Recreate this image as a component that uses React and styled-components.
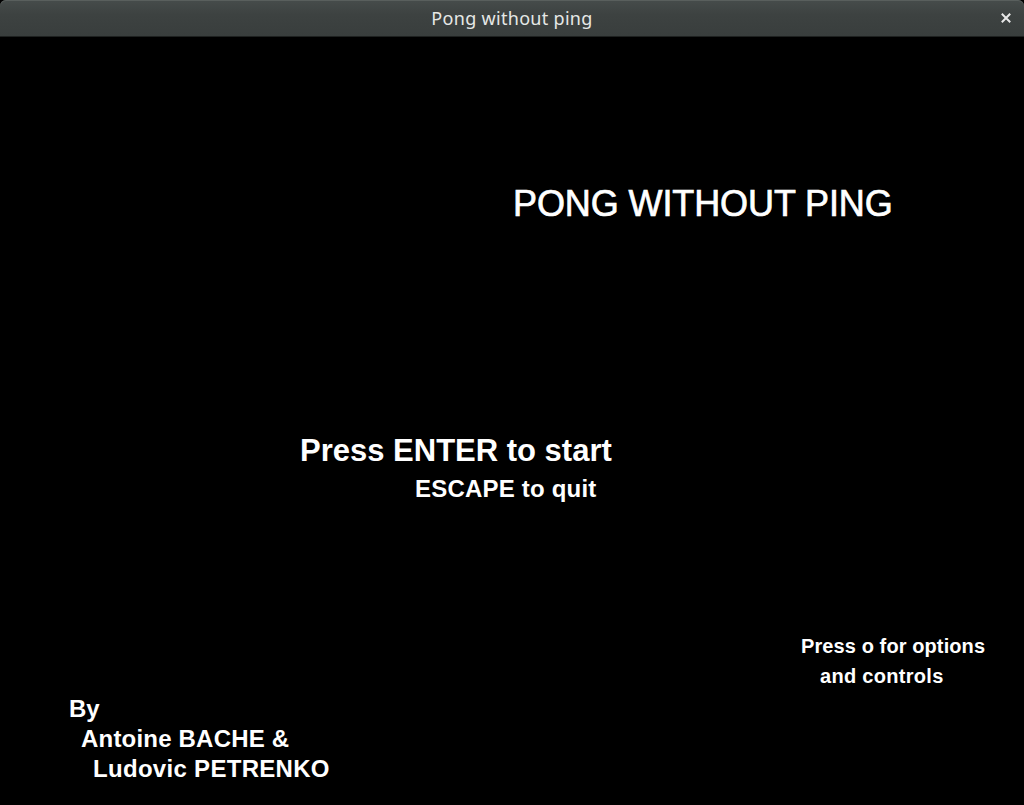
import React from 'react';
import styled, { createGlobalStyle } from 'styled-components';

const GlobalStyle = createGlobalStyle`
	html, body {
		margin: 0;
		padding: 0;
		background: #000;
	}
	#root {
		width: 1024px;
		height: 805px;
	}
`;

const App = () => {
	return (
		<>
			<GlobalStyle />
			<Window>
				<TitleBar>
					<WindowTitle>Pong without ping</WindowTitle>
					<CloseButton>
						<svg width="10" height="10" viewBox="0 0 10 10">
							<path d="M1.5 1.5 L8.5 8.5 M8.5 1.5 L1.5 8.5" stroke="#e8e8e8" strokeWidth="2" strokeLinecap="square" />
						</svg>
					</CloseButton>
				</TitleBar>
				<Screen>
					<GameTitle>PONG WITHOUT PING</GameTitle>
					<Prompt>
						<Line size={31} indent={300}>Press ENTER to start</Line>
						<Line size={24} indent={415} gap={11} spacing={0.2}>ESCAPE to quit</Line>
					</Prompt>
					<Options>
						<Line size={20} indent={801} spacing={0.1}>Press o for options</Line>
						<Line size={20} indent={820} gap={10} spacing={0.3}>and controls</Line>
					</Options>
					<Credits>
						<Line size={24} indent={69}>By</Line>
						<Line size={24} indent={81} gap={6} spacing={0.2}>Antoine BACHE &amp;</Line>
						<Line size={24} indent={93} gap={6} spacing={0.3}>Ludovic PETRENKO</Line>
					</Credits>
				</Screen>
			</Window>
		</>
	);
};

const Window = styled.div`
	display: flex;
	flex-direction: column;
	width: 1024px;
	height: 805px;
	background: #000;
	overflow: hidden;
`;

const TitleBar = styled.div`
	position: relative;
	display: flex;
	align-items: center;
	justify-content: center;
	height: 36px;
	flex-shrink: 0;
	background: linear-gradient(#464c4b, #3d4241 40%, #393e3d);
	border-radius: 6px 6px 0 0;
	border-bottom: 1px solid #1e2120;
	box-shadow: inset 0 1px 0 #595f5d;
`;

const WindowTitle = styled.span`
	font-family: "Noto Sans", "DejaVu Sans", sans-serif;
	font-size: 18px;
	letter-spacing: 0.3px;
	color: #e6e8e6;
	margin-top: -1px;
`;

const CloseButton = styled.div`
	position: absolute;
	right: 13px;
	top: 13px;
	width: 10px;
	height: 10px;
	display: flex;
`;

const Screen = styled.div`
	display: flex;
	flex-direction: column;
	flex: 1;
	font-family: "Liberation Sans", Arial, sans-serif;
	color: #fff;
`;

const GameTitle = styled.div`
	margin-top: 149px;
	padding-left: 513px;
	font-size: 36px;
	line-height: 36px;
	letter-spacing: -0.1px;
	-webkit-text-stroke: 0.7px #fff;
	white-space: nowrap;
`;

const Prompt = styled.div`
	display: flex;
	flex-direction: column;
	margin-top: 213px;
`;

const Options = styled.div`
	display: flex;
	flex-direction: column;
	margin-top: 135px;
`;

const Credits = styled.div`
	display: flex;
	flex-direction: column;
	margin-top: 11px;
`;

const Line = styled.div`
	margin-top: ${props => props.gap || 0}px;
	padding-left: ${props => props.indent}px;
	font-size: ${props => props.size}px;
	line-height: ${props => props.size}px;
	letter-spacing: ${props => props.spacing || 0}px;
	font-weight: 700;
	white-space: nowrap;
`;

export default App;
